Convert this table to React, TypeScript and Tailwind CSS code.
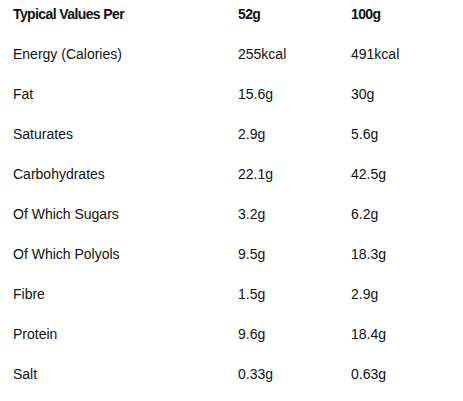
const rows: [string, string, string][] = [
  ['Energy (Calories)', '255kcal', '491kcal'],
  ['Fat', '15.6g', '30g'],
  ['Saturates', '2.9g', '5.6g'],
  ['Carbohydrates', '22.1g', '42.5g'],
  ['Of Which Sugars', '3.2g', '6.2g'],
  ['Of Which Polyols', '9.5g', '18.3g'],
  ['Fibre', '1.5g', '2.9g'],
  ['Protein', '9.6g', '18.4g'],
  ['Salt', '0.33g', '0.63g'],
];

export default function App() {
  return (
    <div className="min-h-screen bg-white pl-[13px] pt-[1px] text-[14px] leading-[26px] text-[#111] font-['Liberation_Sans',Arial,sans-serif]">
      <div className="grid h-10 grid-cols-[225px_113px_1fr] font-bold tracking-[-0.6px]">
        <div>Typical Values Per</div>
        <div>52g</div>
        <div>100g</div>
      </div>
      {rows.map(([label, a, b]) => (
        <div key={label} className="grid h-10 grid-cols-[225px_113px_1fr]">
          <div>{label}</div>
          <div>{a}</div>
          <div>{b}</div>
        </div>
      ))}
    </div>
  );
}
